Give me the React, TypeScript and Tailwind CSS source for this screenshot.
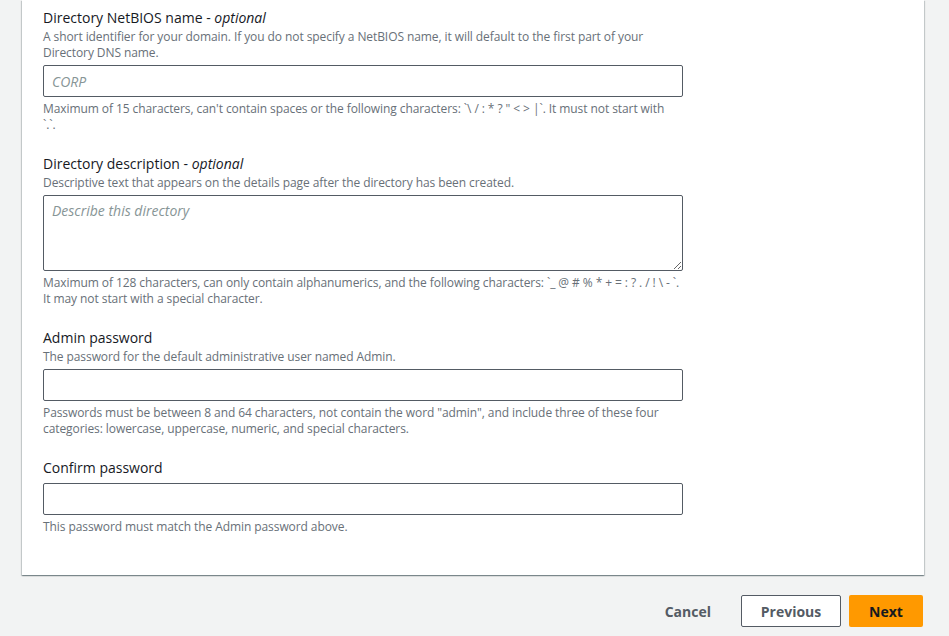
import React from "react";

const font = { fontFamily: '"Open Sans", "Noto Sans", sans-serif' };

function Label({ children, optional }: { children: React.ReactNode; optional?: boolean }) {
  return (
    <div className="text-[14px] leading-[22px] text-[#16191f]">
      {children}
      {optional && (
        <>
          {" - "}
          <i>optional</i>
        </>
      )}
    </div>
  );
}

function Desc({ lines }: { lines: string[] }) {
  return (
    <div className="text-[12px] leading-[16px] tracking-[-0.08px] text-[#687078]">
      {lines.map((l, i) => (
        <div key={i} className="whitespace-nowrap">
          {l}
        </div>
      ))}
    </div>
  );
}

function Constraint({ lines }: { lines: string[] }) {
  return (
    <div className="mt-1 text-[12px] leading-[16px] tracking-[-0.08px] text-[#687078]">
      {lines.map((l, i) => (
        <div key={i} className="whitespace-nowrap">
          {l}
        </div>
      ))}
    </div>
  );
}

function TextInput({ placeholder, type = "text" }: { placeholder?: string; type?: string }) {
  return (
    <input
      type={type}
      placeholder={placeholder}
      className="mt-1 block h-[32px] w-[640px] rounded-[2px] border border-[#545b64] bg-white px-2 text-[14px] italic text-[#16191f] outline-none placeholder:italic placeholder:text-[#879596]"
      style={font}
    />
  );
}

export default function App() {
  return (
    <div className="min-h-[636px] bg-[#f2f3f3]" style={font}>
      <div className="ml-[22px] mr-[25px] bg-white pl-[21px] pt-[7px] pb-[40px] shadow-[0_1px_1px_0_rgba(0,28,36,0.3),1px_1px_1px_0_rgba(0,28,36,0.15),-1px_1px_1px_0_rgba(0,28,36,0.15)]">
        <div>
          <Label optional>Directory NetBIOS name</Label>
          <Desc
            lines={[
              "A short identifier for your domain. If you do not specify a NetBIOS name, it will default to the first part of your",
              "Directory DNS name.",
            ]}
          />
          <TextInput placeholder="CORP" />
          <Constraint
            lines={[
              "Maximum of 15 characters, can't contain spaces or the following characters: `\\ / : * ? \" < > |`. It must not start with",
              "`.`.",
            ]}
          />
        </div>

        <div className="mt-5">
          <Label optional>Directory description</Label>
          <Desc lines={["Descriptive text that appears on the details page after the directory has been created."]} />
          <textarea
            placeholder="Describe this directory"
            className="mt-1 block h-[76px] w-[640px] rounded-[2px] border border-[#545b64] bg-white px-2 py-[4px] text-[14px] leading-[22px] text-[#16191f] outline-none placeholder:italic placeholder:text-[#879596]"
            style={font}
          />
          <Constraint
            lines={[
              "Maximum of 128 characters, can only contain alphanumerics, and the following characters: `_ @ # % * + = : ? . / ! \\ - `.",
              "It may not start with a special character.",
            ]}
          />
        </div>

        <div className="mt-5">
          <Label>Admin password</Label>
          <Desc lines={["The password for the default administrative user named Admin."]} />
          <TextInput type="password" />
          <Constraint
            lines={[
              "Passwords must be between 8 and 64 characters, not contain the word \"admin\", and include three of these four",
              "categories: lowercase, uppercase, numeric, and special characters.",
            ]}
          />
        </div>

        <div className="mt-5">
          <Label>Confirm password</Label>
          <TextInput type="password" />
          <Constraint lines={["This password must match the Admin password above."]} />
        </div>
      </div>

      <div className="mr-[26px] mt-[20px] flex items-center justify-end">
        <button className="mr-[10px] h-[32px] px-5 text-[14px] font-bold text-[#545b64]">Cancel</button>
        <button className="h-[32px] w-[100px] rounded-[2px] border border-[#545b64] bg-white text-[14px] font-bold text-[#545b64]">
          Previous
        </button>
        <button className="ml-2 h-[32px] w-[74px] rounded-[2px] bg-[#ff9900] text-[14px] font-bold text-[#16191f]">
          Next
        </button>
      </div>
    </div>
  );
}
